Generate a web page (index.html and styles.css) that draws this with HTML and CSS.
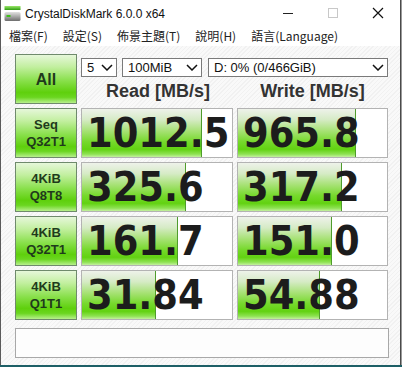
FILE: index.html
```html
<!DOCTYPE html>
<html>
<head>
<meta charset="utf-8">
<link rel="stylesheet" href="styles.css">
</head>
<body>
<div class="window">
  <div class="titlebar">
    <svg class="appicon" width="18" height="18" viewBox="0 0 18 18">
      <defs>
        <linearGradient id="gtop" x1="0" y1="0" x2="0" y2="1">
          <stop offset="0" stop-color="#9be86a"/>
          <stop offset="1" stop-color="#2f9d12"/>
        </linearGradient>
        <linearGradient id="gbody" x1="0" y1="0" x2="0" y2="1">
          <stop offset="0" stop-color="#e2e2e2"/>
          <stop offset="0.5" stop-color="#a9a9a9"/>
          <stop offset="1" stop-color="#6d6d6d"/>
        </linearGradient>
      </defs>
      <rect x="0.5" y="1" width="16" height="4" fill="url(#gtop)"/>
      <rect x="0.5" y="7" width="16" height="9" rx="1.5" fill="url(#gbody)"/>
      <rect x="2.5" y="10" width="4" height="2" fill="#3fbf1a"/>
    </svg>
    <span class="title">CrystalDiskMark 6.0.0 x64</span>
    <div class="controls">
      <svg width="12" height="12" viewBox="0 0 12 12" class="ctl min"><line x1="1" y1="6.5" x2="11" y2="6.5" stroke="#222" stroke-width="1"/></svg>
      <svg width="12" height="12" viewBox="0 0 12 12" class="ctl max"><rect x="1.5" y="1.5" width="9" height="9" fill="none" stroke="#c8c8c8" stroke-width="1"/></svg>
      <svg width="12" height="12" viewBox="0 0 12 12" class="ctl close"><path d="M1 1 L11 11 M11 1 L1 11" stroke="#111" stroke-width="1.2"/></svg>
    </div>
  </div>
  <div class="menubar">
    <span class="menu">檔案(F)</span>
    <span class="menu">設定(S)</span>
    <span class="menu">佈景主題(T)</span>
    <span class="menu">說明(H)</span>
    <span class="menu">語言(Language)</span>
  </div>
  <div class="content">
    <div class="grid">
      <div class="tile all">All</div>
      <div class="selects">
        <div class="sel s1"><span>5</span><svg width="12" height="7" viewBox="0 0 12 7"><path d="M1 1 L6 6 L11 1" fill="none" stroke="#111" stroke-width="1.5"/></svg></div>
        <div class="sel s2"><span>100MiB</span><svg width="12" height="7" viewBox="0 0 12 7"><path d="M1 1 L6 6 L11 1" fill="none" stroke="#111" stroke-width="1.5"/></svg></div>
        <div class="sel s3"><span>D: 0% (0/466GiB)</span><svg width="12" height="7" viewBox="0 0 12 7"><path d="M1 1 L6 6 L11 1" fill="none" stroke="#111" stroke-width="1.5"/></svg></div>
      </div>
      <div class="head read">Read [MB/s]</div>
      <div class="head write">Write [MB/s]</div>

      <div class="tile label">Seq<br>Q32T1</div>
      <div class="val"><div class="bar" style="width:120px"></div><div class="num">1012.5</div></div>
      <div class="val"><div class="bar" style="width:118px"></div><div class="num">965.8</div></div>

      <div class="tile label">4KiB<br>Q8T8</div>
      <div class="val"><div class="bar" style="width:104px"></div><div class="num">325.6</div></div>
      <div class="val"><div class="bar" style="width:104px"></div><div class="num">317.2</div></div>

      <div class="tile label">4KiB<br>Q32T1</div>
      <div class="val"><div class="bar" style="width:96px"></div><div class="num">161.7</div></div>
      <div class="val"><div class="bar" style="width:94px"></div><div class="num">151.0</div></div>

      <div class="tile label">4KiB<br>Q1T1</div>
      <div class="val"><div class="bar" style="width:74px"></div><div class="num">31.84</div></div>
      <div class="val"><div class="bar" style="width:82px"></div><div class="num">54.88</div></div>
    </div>
    <div class="status"></div>
  </div>
</div>
</body>
</html>
```
FILE: styles.css
```css
html, body {
  margin: 0;
  padding: 0;
}
body {
  width: 402px;
  height: 367px;
  background: #1d5f66;
  overflow: hidden;
  font-family: "Liberation Sans", Arial, sans-serif;
}
.window {
  width: 399px;
  height: 365px;
  border-left: 1px solid #5a5a5a;
  border-right: 1px solid #4a4a4a;
  background: #ffffff;
  display: flex;
  flex-direction: column;
  box-shadow: 1px 0 0 #9a9a9a;
}
.titlebar {
  height: 26px;
  display: flex;
  align-items: center;
  background: #fff;
}
.appicon {
  margin-left: 3px;
  margin-top: 1px;
}
.title {
  margin-left: 3px;
  font-size: 12px;
  color: #111;
  margin-top: 1px;
}
.controls {
  margin-left: auto;
  display: flex;
  align-items: center;
  gap: 33px;
  margin-right: 16px;
}
.ctl { display: block; }
.menubar {
  height: 20px;
  display: flex;
  align-items: center;
  font-family: "Noto Sans CJK TC", "Liberation Sans", sans-serif;
  font-size: 12px;
  color: #222;
  padding-left: 0;
}
.menu {
  padding: 0 8px;
  line-height: 18px;
}
.menu + .menu { margin-left: -1px; }
.content {
  flex: 1;
  background: repeating-linear-gradient(135deg, #f9f9f9 0 2px, #f1f1f1 2px 3px);
  padding: 8px 0 0 14px;
  display: flex;
  flex-direction: column;
}
.grid {
  display: grid;
  grid-template-columns: 62px 152px 151px;
  grid-template-rows: 50px 50px 50px 50px 50px;
  column-gap: 4px;
  row-gap: 4px;
}
.tile {
  box-sizing: border-box;
  border: 1px solid #6f8a6c;
  background: linear-gradient(to bottom, #e6f7da 0%, #c2ef9f 25%, #86df47 55%, #5fd00d 78%, #6ad61f 88%, #b7f08c 100%);
  color: #1f3a1c;
  font-weight: bold;
  display: flex;
  align-items: center;
  justify-content: center;
  text-align: center;
}
.all {
  grid-column: 1;
  grid-row: 1;
  font-size: 16px;
  padding-top: 1px;
}
.label {
  font-size: 13px;
  line-height: 17px;
}
.selects {
  grid-column: 2 / 4;
  grid-row: 1;
  align-self: start;
  margin-top: 4px;
  display: flex;
}
.sel {
  box-sizing: border-box;
  height: 19px;
  border: 1px solid #7a7a7a;
  background: #fff;
  display: flex;
  align-items: center;
  justify-content: space-between;
  padding: 0 3px 0 5px;
  font-size: 13px;
  color: #111;
}
.sel svg { display: block; }
.s1 { width: 36px; }
.s2 { width: 80px; margin-left: 5px; }
.s3 { width: 180px; margin-left: 6px; }
.head {
  grid-row: 1;
  align-self: end;
  height: 24px;
  line-height: 24px;
  margin-bottom: 1px;
  text-align: center;
  font-weight: bold;
  font-size: 18px;
  color: #333;
}
.read { grid-column: 2; padding-left: 2px; }
.write { grid-column: 3; }
.val {
  box-sizing: border-box;
  border: 1px solid #b3b3b3;
  background: #fff;
  display: grid;
  overflow: hidden;
}
.bar {
  grid-area: 1 / 1;
  height: 100%;
  border-right: 1px solid #4f9c2c;
  box-sizing: border-box;
  background: linear-gradient(to bottom, #eef2ea 0%, #d6ebc6 22%, #a8e277 45%, #76d92c 68%, #62d212 84%, #8ee252 94%, #c4f0a0 100%);
}
.num {
  grid-area: 1 / 1;
  font-family: "DejaVu Sans Condensed", "DejaVu Sans", sans-serif;
  font-stretch: condensed;
  font-weight: bold;
  font-size: 41px;
  line-height: 48px;
  color: #1c1c1c;
  padding-left: 5px;
  white-space: nowrap;
  letter-spacing: 0;
}
.status {
  box-sizing: border-box;
  margin-top: 8px;
  width: 374px;
  height: 30px;
  border: 1px solid #a8a8a8;
  background: #fdfdfd;
}
```
